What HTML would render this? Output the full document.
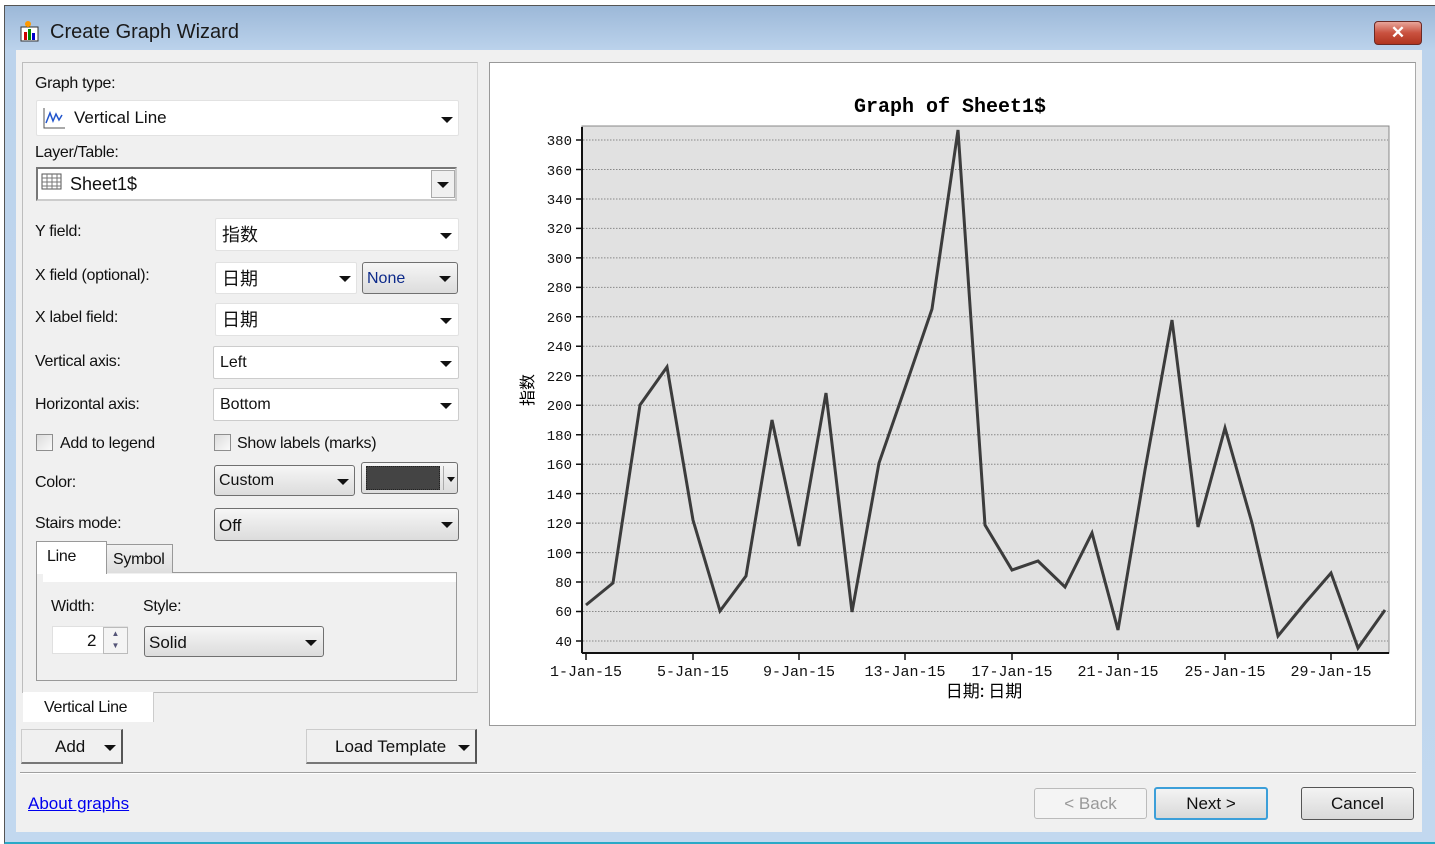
<!DOCTYPE html>
<html><head><meta charset="utf-8"><style>
*{box-sizing:border-box;margin:0;padding:0}
body{width:1435px;height:844px;overflow:hidden;background:#fff;font-family:"Liberation Sans","Noto Sans CJK SC",sans-serif;font-size:16px;color:#111;position:relative}
.a{position:absolute}
.frame{left:4px;top:5px;width:1431px;height:839px;background:linear-gradient(#9cb8d8,#bcd3ec 45px,#c2d8ef);border:1px solid #555;border-bottom:2px solid #2aa9c7;border-right:none}
.body{left:16px;top:50px;width:1406px;height:782px;background:#f0f0f0}
.lbl{position:absolute;font-size:16px;letter-spacing:-0.3px}
.cb{position:absolute;background:#fff;border:1px solid #e2e2e2;border-radius:2px;height:34px}
.cb span{position:absolute;left:6px;top:6px;font-size:17px}
.cb span.cjk{top:2px;font-size:18px}
.arr{position:absolute;width:0;height:0;border-left:6px solid transparent;border-right:6px solid transparent;border-top:6px solid #111}
.btn{position:absolute;background:linear-gradient(#f6f6f6,#dcdcdc);border:1px solid #707070;border-radius:3px}
.chk{position:absolute;width:17px;height:17px;border:1px solid #8e8e8e;background:linear-gradient(135deg,#dcdcdc,#fafafa)}
</style></head><body>
<div class="a frame"></div>
<svg class="a" style="left:18px;top:20px" width="22" height="22" viewBox="0 0 22 22"><rect x="3" y="7" width="17" height="14" fill="#fff" stroke="#333"/><rect x="6" y="12" width="3" height="8" fill="#c00"/><rect x="10" y="9" width="3" height="11" fill="#080"/><rect x="14" y="13" width="3" height="7" fill="#00c"/><circle cx="10" cy="4" r="3" fill="#f90"/></svg>
<div class="a" style="left:50px;top:21px;font-size:20px;color:#1a1a1a">Create Graph Wizard</div>
<div class="a" style="left:1374px;top:21px;width:48px;height:24px;border-radius:4px;border:1px solid #6b2a25;background:linear-gradient(#e8a59a,#c9513f 50%,#b03520);color:#fff;font-weight:bold;text-align:center;font-size:17px;line-height:21px">✕</div>
<div class="a body"></div>

<div class="a" style="left:22px;top:62px;width:456px;height:631px;border:1px solid #bdbdbd;border-right-color:#d5d5d5;background:#f0f0f0"></div>
<div class="lbl" style="left:35px;top:75px">Graph type:</div>
<div class="cb" style="left:36px;top:100px;width:423px;height:36px"><svg class="a" style="left:5px;top:5px" width="24" height="24"><path d="M2 2V22H23" stroke="#555" fill="none"/><path d="M4 17L8 7 11 15 14 8 17 14 20 9" stroke="#2255cc" stroke-width="1.5" fill="none"/></svg><span style="left:37px;top:7px">Vertical Line</span><div class="arr" style="left:404px;top:16px"></div></div>
<div class="lbl" style="left:35px;top:144px">Layer/Table:</div>
<div class="a" style="left:36px;top:167px;width:421px;height:34px;background:#fff;border:2px solid #777;border-right-color:#ccc;border-bottom-color:#ccc">
<svg class="a" style="left:3px;top:4px" width="22" height="18"><rect x="1" y="1" width="19" height="15" fill="#fff" stroke="#555"/><path d="M1 5H20M1 9H20M1 13H20M6 1V16M11 1V16M16 1V16" stroke="#777"/></svg>
<span class="a" style="left:32px;top:5px;font-size:18px">Sheet1$</span>
<div class="a" style="left:393px;top:1px;width:24px;height:28px;background:#f0f0f0;border:1px solid #aaa"><div class="arr" style="left:5px;top:11px"></div></div></div>

<div class="lbl" style="left:35px;top:223px">Y field:</div>
<div class="cb" style="left:215px;top:218px;width:244px;height:33px"><span class="cjk">指数</span><div class="arr" style="left:224px;top:14px"></div></div>
<div class="lbl" style="left:35px;top:267px">X field (optional):</div>
<div class="cb" style="left:215px;top:262px;width:142px;height:32px"><span class="cjk">日期</span><div class="arr" style="left:123px;top:13px"></div></div>
<div class="btn" style="left:362px;top:262px;width:96px;height:32px"><span class="a" style="left:4px;top:7px;font-size:16px;color:#0d2a8a">None</span><div class="arr" style="left:76px;top:13px"></div></div>
<div class="lbl" style="left:35px;top:309px">X label field:</div>
<div class="cb" style="left:215px;top:303px;width:244px;height:33px"><span class="cjk">日期</span><div class="arr" style="left:224px;top:14px"></div></div>
<div class="lbl" style="left:35px;top:353px">Vertical axis:</div>
<div class="cb" style="left:213px;top:346px;width:246px;height:33px;border-color:#ccc"><span style="font-size:16px;top:7px">Left</span><div class="arr" style="left:226px;top:14px"></div></div>
<div class="lbl" style="left:35px;top:396px">Horizontal axis:</div>
<div class="cb" style="left:213px;top:388px;width:246px;height:33px;border-color:#ccc"><span style="font-size:16px;top:7px">Bottom</span><div class="arr" style="left:226px;top:14px"></div></div>
<div class="chk" style="left:36px;top:434px"></div><div class="lbl" style="left:60px;top:435px">Add to legend</div>
<div class="chk" style="left:214px;top:434px"></div><div class="lbl" style="left:237px;top:435px">Show labels (marks)</div>
<div class="lbl" style="left:35px;top:474px">Color:</div>
<div class="btn" style="left:214px;top:465px;width:141px;height:31px"><span class="a" style="left:4px;top:6px">Custom</span><div class="arr" style="left:122px;top:13px"></div></div>
<div class="btn" style="left:361px;top:462px;width:97px;height:32px"><div class="a" style="left:4px;top:3px;width:74px;height:24px;background:#444;border:1px dotted #222"></div><div class="a" style="left:81px;top:3px;width:1px;height:24px;background:#aaa"></div><div class="arr" style="left:85px;top:14px;border-width:5px 4px 0 4px"></div></div>
<div class="lbl" style="left:35px;top:515px">Stairs mode:</div>
<div class="btn" style="left:214px;top:508px;width:245px;height:33px"><span class="a" style="left:4px;top:7px;font-size:17px">Off</span><div class="arr" style="left:226px;top:13px"></div></div>
<div class="a" style="left:36px;top:572px;width:421px;height:109px;border:1px solid #999;background:#f0f0f0"><div class="a" style="left:6px;top:1px;width:413px;height:8px;background:#fff"></div></div>
<div class="a" style="left:106px;top:544px;width:67px;height:29px;border:1px solid #999;border-bottom:none;background:linear-gradient(#f2f2f2,#dedede)"></div>
<div class="lbl" style="left:113px;top:551px">Symbol</div>
<div class="a" style="left:36px;top:541px;width:71px;height:33px;border:1px solid #999;border-bottom:none;background:#fff"></div>
<div class="lbl" style="left:47px;top:548px">Line</div>
<div class="lbl" style="left:51px;top:598px">Width:</div>
<div class="lbl" style="left:143px;top:598px">Style:</div>
<div class="a" style="left:52px;top:626px;width:76px;height:28px;background:#fff;border:1px solid #e0e0e0"><span class="a" style="left:34px;top:4px;font-size:17px">2</span><div class="a" style="left:50px;top:0;width:25px;height:27px;border:1px solid #bbb;background:#f4f4f4;font-size:8px;color:#557;text-align:center;line-height:12px">▲<br>▼</div></div>
<div class="btn" style="left:144px;top:626px;width:180px;height:31px"><span class="a" style="left:4px;top:6px;font-size:17px">Solid</span><div class="arr" style="left:160px;top:13px"></div></div>
<div class="a" style="left:23px;top:692px;width:131px;height:30px;background:#fff;border-right:1px solid #ccc"></div>
<div class="lbl" style="left:44px;top:699px">Vertical Line</div>
<div class="a" style="left:21px;top:729px;width:102px;height:35px;background:#f0f0f0;border:1px solid #ccc;border-right:2px solid #555;border-bottom:2px solid #777"><span class="a" style="left:33px;top:7px;font-size:17px">Add</span><div class="arr" style="left:82px;top:15px"></div></div>
<div class="a" style="left:306px;top:729px;width:171px;height:35px;background:#f0f0f0;border:1px solid #ccc;border-right:2px solid #555;border-bottom:2px solid #777"><span class="a" style="left:28px;top:7px;font-size:17px">Load Template</span><div class="arr" style="left:151px;top:15px"></div></div>

<div class="a" style="left:489px;top:62px;width:927px;height:664px;background:#fff;border:1px solid #999;border-right-color:#aaa"></div>
<svg class="a" style="left:0;top:0" width="1435" height="844">
<text x="950" y="112" text-anchor="middle" font-family="Liberation Mono,monospace" font-weight="bold" font-size="20">Graph of Sheet1$</text>
<rect x="582" y="126" width="807" height="527" fill="#e1e1e1" stroke="#888"/>
<line x1="582" y1="127" x2="582" y2="653" stroke="#111" stroke-width="2"/>
<line x1="582" y1="653" x2="1389" y2="653" stroke="#111" stroke-width="2"/>
<g stroke="#888" stroke-dasharray="1.5,1.5">
<path d="M583 641H1388M583 611.5H1388M583 582H1388M583 552.6H1388M583 523.1H1388M583 493.6H1388M583 464.2H1388M583 434.7H1388M583 405.2H1388M583 375.8H1388M583 346.3H1388M583 316.8H1388M583 287.4H1388M583 257.9H1388M583 228.4H1388M583 199H1388M583 169.5H1388M583 140H1388"/>
</g>
<g stroke="#111" stroke-width="1.5"><path d="M576 641H582M576 611.5H582M576 582H582M576 552.6H582M576 523.1H582M576 493.6H582M576 464.2H582M576 434.7H582M576 405.2H582M576 375.8H582M576 346.3H582M576 316.8H582M576 287.4H582M576 257.9H582M576 228.4H582M576 199H582M576 169.5H582M576 140H582M586 653V660M693 653V660M799 653V660M905 653V660M1012 653V660M1118 653V660M1225 653V660M1331 653V660"/></g>
<g font-family="Liberation Mono,monospace" font-size="14" text-anchor="end" fill="#111">
<text x="572" y="646">40</text><text x="572" y="616">60</text><text x="572" y="587">80</text><text x="572" y="558">100</text><text x="572" y="528">120</text><text x="572" y="499">140</text><text x="572" y="469">160</text><text x="572" y="440">180</text><text x="572" y="410">200</text><text x="572" y="381">220</text><text x="572" y="351">240</text><text x="572" y="322">260</text><text x="572" y="292">280</text><text x="572" y="263">300</text><text x="572" y="233">320</text><text x="572" y="204">340</text><text x="572" y="175">360</text><text x="572" y="145">380</text>
</g>
<g font-family="Liberation Mono,monospace" font-size="15" text-anchor="middle" fill="#111">
<text x="586" y="676">1-Jan-15</text><text x="693" y="676">5-Jan-15</text><text x="799" y="676">9-Jan-15</text><text x="905" y="676">13-Jan-15</text><text x="1012" y="676">17-Jan-15</text><text x="1118" y="676">21-Jan-15</text><text x="1225" y="676">25-Jan-15</text><text x="1331" y="676">29-Jan-15</text>
</g>
<text x="984" y="697" text-anchor="middle" font-family="Noto Sans CJK SC,sans-serif" font-size="17">日期: 日期</text>
<text transform="translate(533,390) rotate(-90)" text-anchor="middle" font-family="Noto Sans CJK SC,sans-serif" font-size="16">指数</text>
<polyline fill="none" stroke="#3c3c3c" stroke-width="3" points="586,605 613,583 640,405 667,367 693,520 720,611 746,576 772,420 799,546 826,393 852,612 879,463 905,388 932,309 958,130 985,525 1012,570 1038,561 1065,587 1092,533 1118,630 1145,470 1172,320 1198,527 1225,428 1252,523 1278,636 1305,603 1331,573 1358,648 1385,610"/>
</svg>

<div class="a" style="left:20px;top:772px;width:1396px;height:2px;border-top:1px solid #a0a0a0;border-bottom:1px solid #fff"></div>
<div class="a" style="left:28px;top:794px;color:#0000ee;text-decoration:underline;font-size:17px">About graphs</div>
<div class="a" style="left:1034px;top:788px;width:113px;height:31px;border:1px solid #bbb;border-radius:3px;background:#f4f4f4;color:#999;text-align:center;line-height:29px;font-size:17px">&lt; Back</div>
<div class="a" style="left:1154px;top:787px;width:114px;height:33px;border:2px solid #3c9fd9;border-radius:3px;background:linear-gradient(#f3f3f3,#d9d9d9);text-align:center;line-height:29px;font-size:17px">Next &gt;</div>
<div class="a" style="left:1301px;top:787px;width:113px;height:33px;border:1px solid #555;border-radius:3px;background:linear-gradient(#f3f3f3,#d9d9d9);text-align:center;line-height:31px;font-size:17px">Cancel</div>
</body></html>
